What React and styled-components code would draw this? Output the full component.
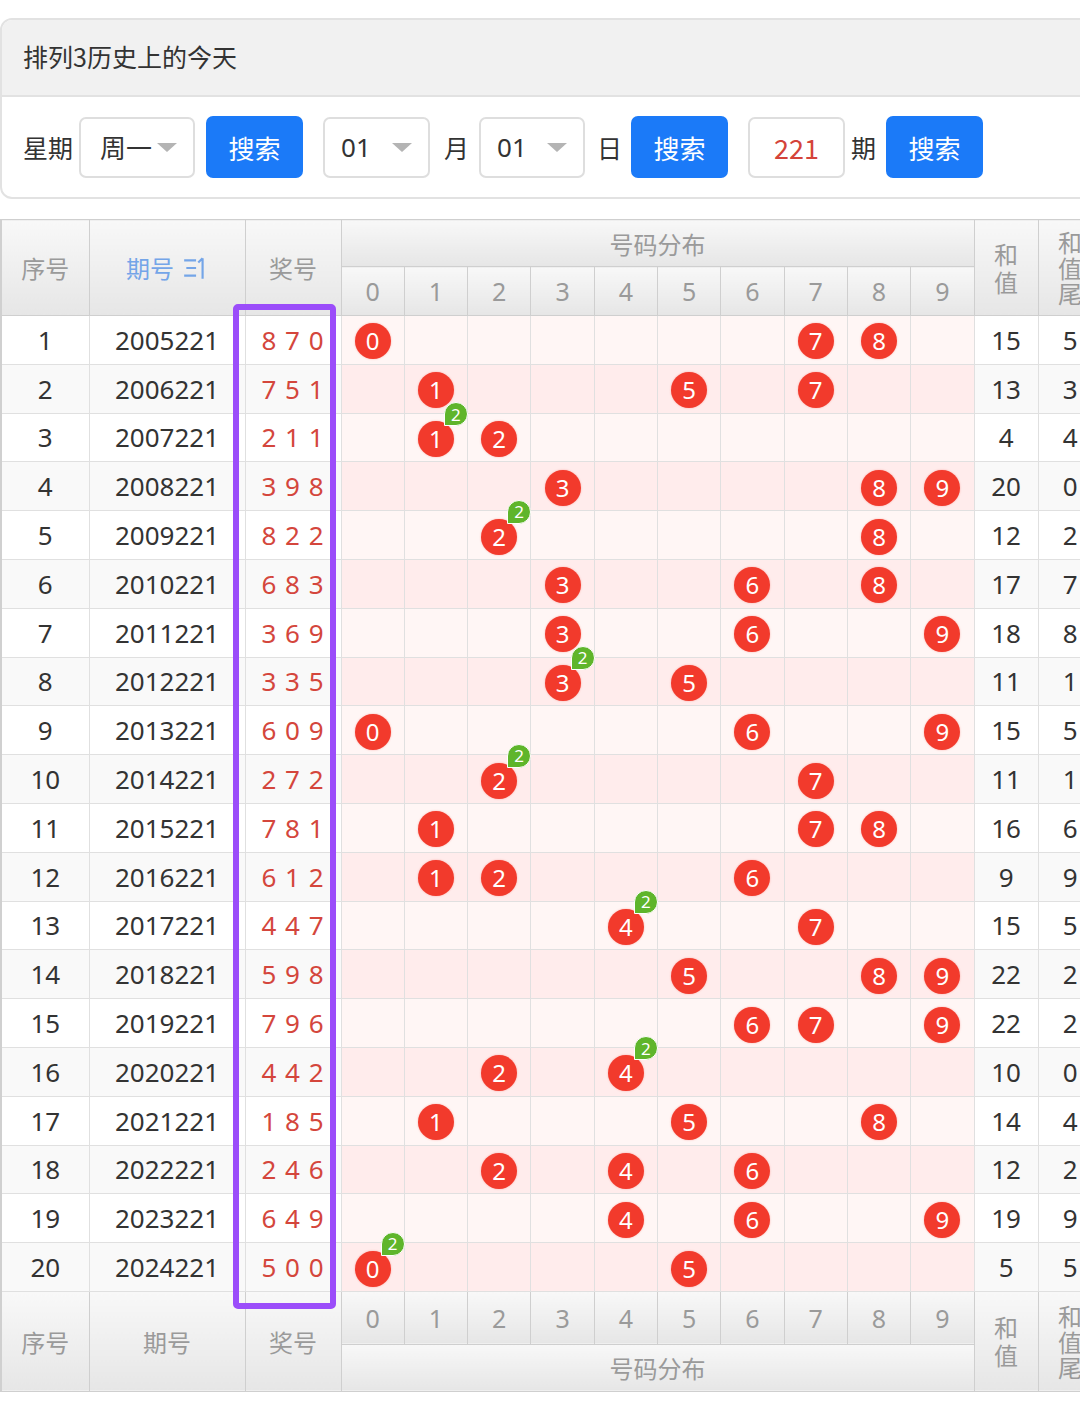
import React from "react";
import styled, { createGlobalStyle, css } from "styled-components";

const GlobalStyle = createGlobalStyle`
  html, body {
    margin: 0;
    padding: 0;
    background: #fff;
    overflow-x: hidden;
  }
  body {
    font-family: "Noto Sans", "Noto Sans CJK SC", sans-serif;
    color: #333;
  }
`;

const draws = [
  ["2005221", "870"],
  ["2006221", "751"],
  ["2007221", "211"],
  ["2008221", "398"],
  ["2009221", "822"],
  ["2010221", "683"],
  ["2011221", "369"],
  ["2012221", "335"],
  ["2013221", "609"],
  ["2014221", "272"],
  ["2015221", "781"],
  ["2016221", "612"],
  ["2017221", "447"],
  ["2018221", "598"],
  ["2019221", "796"],
  ["2020221", "442"],
  ["2021221", "185"],
  ["2022221", "246"],
  ["2023221", "649"],
  ["2024221", "500"],
];

const digits = [0, 1, 2, 3, 4, 5, 6, 7, 8, 9];

// stacked header text, one character per line
const Stack = ({ chars, lh }) => (
  <StackBox>
    {chars.split("").map(c => (
      <StackChar key={c} $lh={lh}>
        {c}
      </StackChar>
    ))}
  </StackBox>
);

const App = () => {
  return (
    <Page>
      <GlobalStyle />
      <Card>
        <CardHead>排列3历史上的今天</CardHead>
        <CardBody>
          <Label>星期</Label>
          <Select $width={116} $ml={6} $pl={19}>
            周一
            <Caret />
          </Select>
          <Button $ml={11}>搜索</Button>
          <Select $width={107} $ml={20} $pl={16}>
            01
            <Caret />
          </Select>
          <Label $ml={14}>月</Label>
          <Select $width={106} $ml={10} $pl={16}>
            01
            <Caret />
          </Select>
          <Label $ml={12}>日</Label>
          <Button $ml={9}>搜索</Button>
          <Issue $ml={20}>221</Issue>
          <Label $ml={6}>期</Label>
          <Button $ml={10}>搜索</Button>
        </CardBody>
      </Card>

      <TableWrap>
        <Table>
          <colgroup>
            <col style={{ width: 88 }} />
            <col style={{ width: 156 }} />
            <col style={{ width: 96 }} />
            {digits.map(d => (
              <col key={d} style={{ width: 63.3 }} />
            ))}
            <col style={{ width: 64 }} />
            <col style={{ width: 64 }} />
          </colgroup>
          <thead>
            <HeadRow $h={47}>
              <Th rowSpan={2}>序号</Th>
              <Th rowSpan={2} $active>
                期号
                <SortIcon viewBox="0 0 24 24">
                  <path d="M2 5h11M4 12h9M2 19h11" />
                  <path d="M19 22V3M15 7l4-4" />
                </SortIcon>
              </Th>
              <Th rowSpan={2}>奖号</Th>
              <Th colSpan={10}>号码分布</Th>
              <Th rowSpan={2}>
                <Stack chars="和值" lh={28} />
              </Th>
              <Th rowSpan={2}>
                <Stack chars="和值尾" lh={25.5} />
              </Th>
            </HeadRow>
            <HeadRow $h={49}>
              {digits.map(d => (
                <NumTh key={d}>{d}</NumTh>
              ))}
            </HeadRow>
          </thead>
          <tbody>
            {draws.map(([issue, code], i) => {
              const nums = code.split("").map(Number);
              const sum = nums.reduce((a, b) => a + b, 0);
              const counts = {};
              nums.forEach(n => (counts[n] = (counts[n] || 0) + 1));
              const even = i % 2 === 1;
              return (
                <Row key={issue}>
                  <Td $even={even}>{i + 1}</Td>
                  <Td $even={even}>{issue}</Td>
                  <Td $even={even}>
                    <Code>{nums.join(" ")}</Code>
                  </Td>
                  {digits.map(d => (
                    <BallCell key={d} $even={even}>
                      {counts[d] && (
                        <Ball>
                          {d}
                          {counts[d] > 1 && <Badge>{counts[d]}</Badge>}
                        </Ball>
                      )}
                    </BallCell>
                  ))}
                  <Td $even={even}>{sum}</Td>
                  <Td $even={even}>{sum % 10}</Td>
                </Row>
              );
            })}
          </tbody>
          <tfoot>
            <HeadRow $h={53}>
              <Th rowSpan={2}>序号</Th>
              <Th rowSpan={2}>期号</Th>
              <Th rowSpan={2}>奖号</Th>
              {digits.map(d => (
                <NumTh key={d}>{d}</NumTh>
              ))}
              <Th rowSpan={2}>
                <Stack chars="和值" lh={28} />
              </Th>
              <Th rowSpan={2}>
                <Stack chars="和值尾" lh={25.5} />
              </Th>
            </HeadRow>
            <HeadRow $h={47}>
              <Th colSpan={10}>号码分布</Th>
            </HeadRow>
          </tfoot>
        </Table>
        <Highlight />
      </TableWrap>
    </Page>
  );
};

export default App;

const Page = styled.div`
  width: 1101px;
  padding-top: 18px;
  padding-bottom: 20px;
`;

const Card = styled.section`
  width: 1120px;
  border: 2px solid #e2e2e2;
  border-radius: 12px;
  overflow: hidden;
  font-family: "Noto Sans CJK SC", sans-serif;
`;

const CardHead = styled.div`
  height: 77px;
  display: flex;
  align-items: center;
  padding-left: 21px;
  padding-bottom: 4px;
  box-sizing: border-box;
  background: #f1f1f1;
  border-bottom: 2px solid #e2e2e2;
  font-size: 25px;
  color: #333;
`;

const CardBody = styled.div`
  display: flex;
  align-items: center;
  padding: 19px 0 19px 21px;
`;

const Label = styled.span`
  margin-left: ${p => p.$ml || 0}px;
  font-size: 25px;
  color: #333;
`;

const Select = styled.div`
  box-sizing: border-box;
  width: ${p => p.$width}px;
  height: 61px;
  margin-left: ${p => p.$ml}px;
  padding: 0 16px 0 ${p => p.$pl}px;
  display: flex;
  align-items: center;
  justify-content: space-between;
  border: 2px solid #dedede;
  border-radius: 7px;
  font-family: "Noto Sans", "Noto Sans CJK SC", sans-serif;
  font-size: 26px;
  color: #333;
`;

const Caret = styled.span`
  width: 0;
  height: 0;
  border-left: 10px solid transparent;
  border-right: 10px solid transparent;
  border-top: 9px solid #b4b4b4;
`;

const Button = styled.button`
  box-sizing: border-box;
  width: 97px;
  height: 62px;
  margin-left: ${p => p.$ml}px;
  border: none;
  border-radius: 7px;
  background: #1b7af8;
  color: #fff;
  font-family: "Noto Sans CJK SC", sans-serif;
  font-size: 26px;
  padding: 0;
`;

const Issue = styled.div`
  box-sizing: border-box;
  width: 97px;
  height: 61px;
  margin-left: ${p => p.$ml}px;
  display: flex;
  align-items: center;
  justify-content: center;
  border: 2px solid #dedede;
  border-radius: 7px;
  font-size: 27px;
  color: #d4433a;
`;

const TableWrap = styled.div`
  position: relative;
  margin-top: 20px;
  width: 1101px;
`;

const Table = styled.table`
  width: 1101px;
  table-layout: fixed;
  border-collapse: collapse;
  border-left: 2px solid #d0d0d0;
  font-family: "Noto Sans", "Noto Sans CJK SC", sans-serif;
`;

const HeadRow = styled.tr`
  height: ${p => p.$h}px;
`;

const headCell = css`
  padding: 0;
  font-weight: normal;
  text-align: center;
  vertical-align: middle;
  color: #9a9a9a;
  border: 1px solid #cfcfcf;
  background: linear-gradient(#f8f8f8, #e6e6e6);
`;

const Th = styled.th`
  ${headCell};
  font-family: "Noto Sans CJK SC", sans-serif;
  font-size: 24px;
  color: ${p => (p.$active ? "#74a5e8" : "#9a9a9a")};
  white-space: nowrap;
`;

const StackBox = styled.div`
  display: flex;
  flex-direction: column;
  align-items: center;
`;

const StackChar = styled.span`
  display: block;
  height: ${p => p.$lh}px;
  line-height: ${p => p.$lh}px;
  overflow: visible;
`;

const NumTh = styled.th`
  ${headCell};
  font-size: 25px;
`;

const SortIcon = styled.svg`
  width: 26px;
  height: 26px;
  margin-left: 8px;
  vertical-align: -3px;
  fill: none;
  stroke: #74a5e8;
  stroke-width: 2;
`;

const Row = styled.tr`
  height: 48.8px;
`;

const Td = styled.td`
  padding: 0;
  text-align: center;
  vertical-align: middle;
  font-size: 26px;
  color: #333;
  border: 1px solid #e0e0e0;
  background: ${p => (p.$even ? "#f9f9f9" : "#fff")};
`;

const BallCell = styled(Td)`
  background: ${p => (p.$even ? "#ffecec" : "#fff6f5")};
`;

const Code = styled.span`
  color: #d4463c;
  letter-spacing: 1px;
`;

const Ball = styled.span`
  position: relative;
  display: inline-flex;
  align-items: center;
  justify-content: center;
  width: 36px;
  height: 36px;
  vertical-align: middle;
  border-radius: 50%;
  background: #f23a2c;
  box-shadow: 0 0 2px rgba(242, 58, 44, 0.4);
  color: #fff;
  font-size: 24px;
  line-height: 1;
`;

const Badge = styled.span`
  position: absolute;
  z-index: 2;
  left: 26px;
  top: -19px;
  box-sizing: border-box;
  width: 24px;
  height: 24px;
  display: flex;
  align-items: center;
  justify-content: center;
  border: 1px solid #fff;
  border-radius: 50% 50% 50% 0;
  background: #5fb52b;
  color: #fff;
  font-size: 17px;
`;

const Highlight = styled.div`
  position: absolute;
  z-index: 3;
  left: 233px;
  top: 85px;
  width: 103px;
  height: 1005px;
  box-sizing: border-box;
  border: 6px solid #9b4dfa;
  border-radius: 5px;
  pointer-events: none;
`;
